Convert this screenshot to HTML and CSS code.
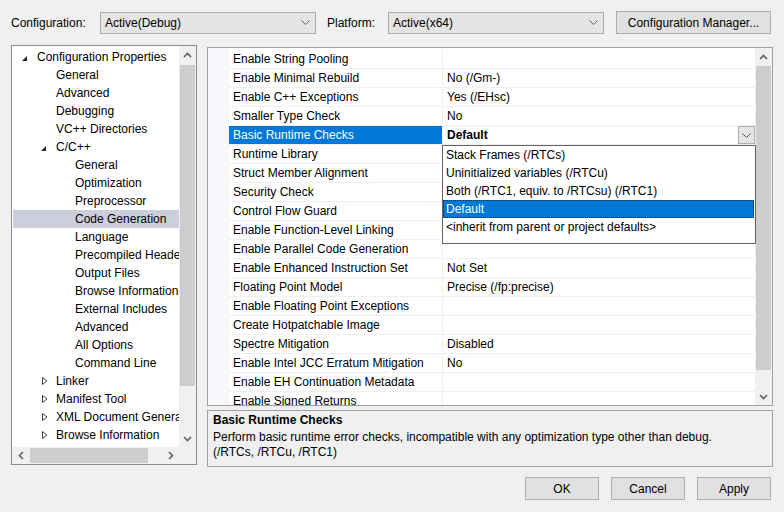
FILE: index.html
```html
<!DOCTYPE html>
<html>
<head>
<meta charset="utf-8">
<link rel="stylesheet" href="styles.css">
</head>
<body>
<div class="topbar">
  <span class="lbl">Configuration:</span>
  <div class="combo"><span>Active(Debug)</span><svg class="cchev" width="9" height="5" viewBox="0 0 9 5"><path d="M0.5 0.5 L4.5 4.5 L8.5 0.5" fill="none" stroke="#606060" stroke-width="1"/></svg></div>
  <span class="lbl lbl-plat">Platform:</span>
  <div class="combo"><span>Active(x64)</span><svg class="cchev" width="9" height="5" viewBox="0 0 9 5"><path d="M0.5 0.5 L4.5 4.5 L8.5 0.5" fill="none" stroke="#606060" stroke-width="1"/></svg></div>
  <button class="btn cm">Configuration Manager...</button>
</div>

<div class="main">
  <div class="tree">
    <div class="tree-view">
      <div class="tree-rows">
        <div class="trow l0"><span class="exp"><svg class="tri-x" width="5" height="5" viewBox="0 0 5 5"><polygon points="5,0 5,5 0,5" fill="#262626"/></svg></span>Configuration Properties</div>
        <div class="trow l1"><span class="exp"></span>General</div>
        <div class="trow l1"><span class="exp"></span>Advanced</div>
        <div class="trow l1"><span class="exp"></span>Debugging</div>
        <div class="trow l1"><span class="exp"></span>VC++ Directories</div>
        <div class="trow l1"><span class="exp"><svg class="tri-x" width="5" height="5" viewBox="0 0 5 5"><polygon points="5,0 5,5 0,5" fill="#262626"/></svg></span>C/C++</div>
        <div class="trow l2"><span class="exp"></span>General</div>
        <div class="trow l2"><span class="exp"></span>Optimization</div>
        <div class="trow l2"><span class="exp"></span>Preprocessor</div>
        <div class="trow l2 sel"><span class="exp"></span>Code Generation</div>
        <div class="trow l2"><span class="exp"></span>Language</div>
        <div class="trow l2"><span class="exp"></span>Precompiled Headers</div>
        <div class="trow l2"><span class="exp"></span>Output Files</div>
        <div class="trow l2"><span class="exp"></span>Browse Information</div>
        <div class="trow l2"><span class="exp"></span>External Includes</div>
        <div class="trow l2"><span class="exp"></span>Advanced</div>
        <div class="trow l2"><span class="exp"></span>All Options</div>
        <div class="trow l2"><span class="exp"></span>Command Line</div>
        <div class="trow l1"><span class="exp"><svg class="tri-c" width="6" height="8" viewBox="0 0 6 8"><polygon points="0.5,0.5 5,4 0.5,7.5" fill="none" stroke="#404040" stroke-width="1"/></svg></span>Linker</div>
        <div class="trow l1"><span class="exp"><svg class="tri-c" width="6" height="8" viewBox="0 0 6 8"><polygon points="0.5,0.5 5,4 0.5,7.5" fill="none" stroke="#404040" stroke-width="1"/></svg></span>Manifest Tool</div>
        <div class="trow l1"><span class="exp"><svg class="tri-c" width="6" height="8" viewBox="0 0 6 8"><polygon points="0.5,0.5 5,4 0.5,7.5" fill="none" stroke="#404040" stroke-width="1"/></svg></span>XML Document Generator</div>
        <div class="trow l1"><span class="exp"><svg class="tri-c" width="6" height="8" viewBox="0 0 6 8"><polygon points="0.5,0.5 5,4 0.5,7.5" fill="none" stroke="#404040" stroke-width="1"/></svg></span>Browse Information</div>
      </div>
      <div class="vscroll">
        <div class="sbtn"><svg width="9" height="6" viewBox="0 0 9 6"><path d="M1 5 L4.5 1.5 L8 5" fill="none" stroke="#606060" stroke-width="1.6"/></svg></div>
        <div class="thumb tthumb"></div>
        <div class="track"></div>
        <div class="sbtn"><svg width="9" height="6" viewBox="0 0 9 6"><path d="M1 1 L4.5 4.5 L8 1" fill="none" stroke="#606060" stroke-width="1.6"/></svg></div>
      </div>
    </div>
    <div class="hrow">
      <div class="hscroll">
        <div class="hbtn"><svg width="6" height="9" viewBox="0 0 6 9"><path d="M5 1 L1.5 4.5 L5 8" fill="none" stroke="#606060" stroke-width="1.6"/></svg></div>
        <div class="hthumb"></div>
        <div class="track"></div>
        <div class="hbtn"><svg width="6" height="9" viewBox="0 0 6 9"><path d="M1 1 L4.5 4.5 L1 8" fill="none" stroke="#606060" stroke-width="1.6"/></svg></div>
      </div>
      <div class="corner"></div>
    </div>
  </div>

  <div class="right">
    <div class="grid">
      <div class="gutter"></div>
      <div class="grows">
        <div class="grow"><div class="gname">Enable String Pooling</div><div class="gval"></div></div>
        <div class="grow"><div class="gname">Enable Minimal Rebuild</div><div class="gval">No (/Gm-)</div></div>
        <div class="grow"><div class="gname">Enable C++ Exceptions</div><div class="gval">Yes (/EHsc)</div></div>
        <div class="grow"><div class="gname">Smaller Type Check</div><div class="gval">No</div></div>
        <div class="grow sel"><div class="gname">Basic Runtime Checks</div><div class="gval"><span>Default</span><span class="ddbtn"><svg width="9" height="5" viewBox="0 0 9 5"><path d="M0.5 0.5 L4.5 4.5 L8.5 0.5" fill="none" stroke="#505050" stroke-width="1"/></svg></span></div></div>
        <div class="grow"><div class="gname">Runtime Library</div><div class="gval"></div></div>
        <div class="grow"><div class="gname">Struct Member Alignment</div><div class="gval"></div></div>
        <div class="grow"><div class="gname">Security Check</div><div class="gval"></div></div>
        <div class="grow"><div class="gname">Control Flow Guard</div><div class="gval"></div></div>
        <div class="grow"><div class="gname">Enable Function-Level Linking</div><div class="gval"></div></div>
        <div class="grow"><div class="gname">Enable Parallel Code Generation</div><div class="gval"></div></div>
        <div class="grow"><div class="gname">Enable Enhanced Instruction Set</div><div class="gval">Not Set</div></div>
        <div class="grow"><div class="gname">Floating Point Model</div><div class="gval">Precise (/fp:precise)</div></div>
        <div class="grow"><div class="gname">Enable Floating Point Exceptions</div><div class="gval"></div></div>
        <div class="grow"><div class="gname">Create Hotpatchable Image</div><div class="gval"></div></div>
        <div class="grow"><div class="gname">Spectre Mitigation</div><div class="gval">Disabled</div></div>
        <div class="grow"><div class="gname">Enable Intel JCC Erratum Mitigation</div><div class="gval">No</div></div>
        <div class="grow"><div class="gname">Enable EH Continuation Metadata</div><div class="gval"></div></div>
        <div class="grow"><div class="gname">Enable Signed Returns</div><div class="gval"></div></div>
      </div>
      <div class="vscroll">
        <div class="sbtn"><svg width="9" height="6" viewBox="0 0 9 6"><path d="M1 5 L4.5 1.5 L8 5" fill="none" stroke="#606060" stroke-width="1.6"/></svg></div>
        <div class="thumb gthumb"></div>
        <div class="track"></div>
        <div class="sbtn"><svg width="9" height="6" viewBox="0 0 9 6"><path d="M1 1 L4.5 4.5 L8 1" fill="none" stroke="#606060" stroke-width="1.6"/></svg></div>
      </div>
      <div class="ddlist">
        <div class="dditem">Stack Frames (/RTCs)</div>
        <div class="dditem">Uninitialized variables (/RTCu)</div>
        <div class="dditem">Both (/RTC1, equiv. to /RTCsu) (/RTC1)</div>
        <div class="dditem sel">Default</div>
        <div class="dditem">&lt;inherit from parent or project defaults&gt;</div>
      </div>
    </div>
    <div class="desc">
      <div class="desc-title">Basic Runtime Checks</div>
      <div class="desc-text">Perform basic runtime error checks, incompatible with any optimization type other than debug.<br>(/RTCs, /RTCu, /RTC1)</div>
    </div>
  </div>
</div>

<div class="buttons">
  <button class="btn dlg">OK</button>
  <button class="btn dlg">Cancel</button>
  <button class="btn dlg">Apply</button>
</div>
</body>
</html>
```

FILE: styles.css
```css
* { box-sizing: border-box; }
html, body { margin: 0; padding: 0; }
body {
  width: 784px;
  height: 512px;
  overflow: hidden;
  background: #f0f0f0;
  font-family: "Liberation Sans", Arial, sans-serif;
  font-size: 12px;
  color: #000;
}

/* top bar */
.topbar {
  display: flex;
  align-items: center;
  height: 23px;
  margin-top: 11px;
  padding-left: 11px;
}
.lbl { width: 89px; flex: none; }
.lbl-plat { width: 61px; margin-left: 11px; }
.combo {
  width: 216px;
  height: 22px;
  flex: none;
  background: #e5e5e5;
  border: 1px solid #adadad;
  display: flex;
  align-items: center;
  justify-content: space-between;
  padding: 0 5px 0 4px;
}
.btn {
  height: 23px;
  border: 1px solid #adadad;
  background: #e1e1e1;
  font: inherit;
  color: #000;
  padding: 0;
  flex: none;
}
.cm { width: 155px; margin-left: 12px; }

/* main */
.main {
  display: flex;
  gap: 10px;
  height: 422px;
  margin-top: 11px;
  padding-left: 11px;
}

/* tree */
.tree {
  width: 186px;
  height: 420px;
  border: 1px solid #8c8c8c;
  background: #fff;
  display: flex;
  flex-direction: column;
}
.tree-view { height: 401px; display: flex; }
.tree-rows {
  flex: 1;
  min-width: 0;
  padding-top: 2px;
  padding-left: 1px;
  overflow: hidden;
}
.trow {
  height: 18px;
  line-height: 18px;
  display: flex;
  align-items: center;
  white-space: nowrap;
  overflow: hidden;
}
.trow.sel { background: #cccedb; }
.l0 { padding-left: 9px; }
.l1 { padding-left: 28px; }
.l2 { padding-left: 47px; }
.exp { width: 15px; flex: none; display: flex; align-items: center; height: 18px; }
.tri-x { margin-top: 3px; }
.tri-c { margin-left: 1px; }

.vscroll {
  width: 17px;
  flex: none;
  background: #f0f0f0;
  display: flex;
  flex-direction: column;
}
.sbtn {
  height: 17px;
  flex: none;
  display: flex;
  align-items: center;
  justify-content: center;
}
.thumb { background: #cdcdcd; margin: 2px 1px 0 1px; flex: none; }
.tthumb { height: 321px; }
.gthumb { height: 304px; margin-top: 1px; }
.track { flex: 1; }

.hrow { height: 17px; display: flex; }
.hscroll {
  width: 167px;
  background: #f0f0f0;
  display: flex;
}
.hbtn {
  width: 17px;
  flex: none;
  display: flex;
  align-items: center;
  justify-content: center;
}
.hthumb { width: 118px; margin: 1px 0 1px 1px; background: #cdcdcd; flex: none; }
.corner { width: 17px; background: #f0f0f0; }

/* right column */
.right {
  width: 566px;
  display: flex;
  flex-direction: column;
  padding-top: 2px;
}
.grid {
  height: 359px;
  border: 1px solid #a0a0a0;
  background: #fff;
  display: flex;
  position: relative;
}
.gutter { width: 21px; flex: none; background: #f5f7fb; }
.grows { width: 526px; flex: none; padding-top: 2px; overflow: hidden; }
.grow {
  display: flex;
  height: 19px;
  border-bottom: 1px solid #f0f0f0;
}
.gname {
  width: 214px;
  flex: none;
  padding-left: 4px;
  border-right: 1px solid #f0f0f0;
  line-height: 18px;
  white-space: nowrap;
  overflow: hidden;
}
.gval {
  flex: 1;
  padding-left: 4px;
  line-height: 18px;
  white-space: nowrap;
  overflow: hidden;
  display: flex;
}
.grow.sel .gname { background: #0078d7; color: #fff; }
.grow.sel .gval { font-weight: bold; justify-content: space-between; }
.ddbtn {
  width: 17px;
  height: 18px;
  border: 1px solid #adadad;
  background: #e5e5e5;
  display: flex;
  align-items: center;
  justify-content: center;
}

.ddlist {
  position: absolute;
  left: 234px;
  top: 97px;
  width: 314px;
  height: 99px;
  border: 1px solid #646464;
  background: #fff;
}
.dditem { height: 18px; line-height: 18px; padding-left: 3px; white-space: nowrap; }
.dditem.sel {
  background: #0078d7;
  color: #fff;
  margin-right: 1px;
  outline: 1px dotted #2a2a2a;
  outline-offset: -1px;
}

.desc {
  height: 57px;
  margin-top: 4px;
  border: 1px solid #a0a0a0;
  padding: 1px 5px;
}
.desc-title { font-weight: bold; line-height: 16px; }
.desc-text { margin-top: 2px; line-height: 15px; }

/* dialog buttons */
.buttons {
  display: flex;
  justify-content: flex-end;
  gap: 12px;
  padding-right: 13px;
  margin-top: 10px;
}
.dlg { width: 74px; }
```
